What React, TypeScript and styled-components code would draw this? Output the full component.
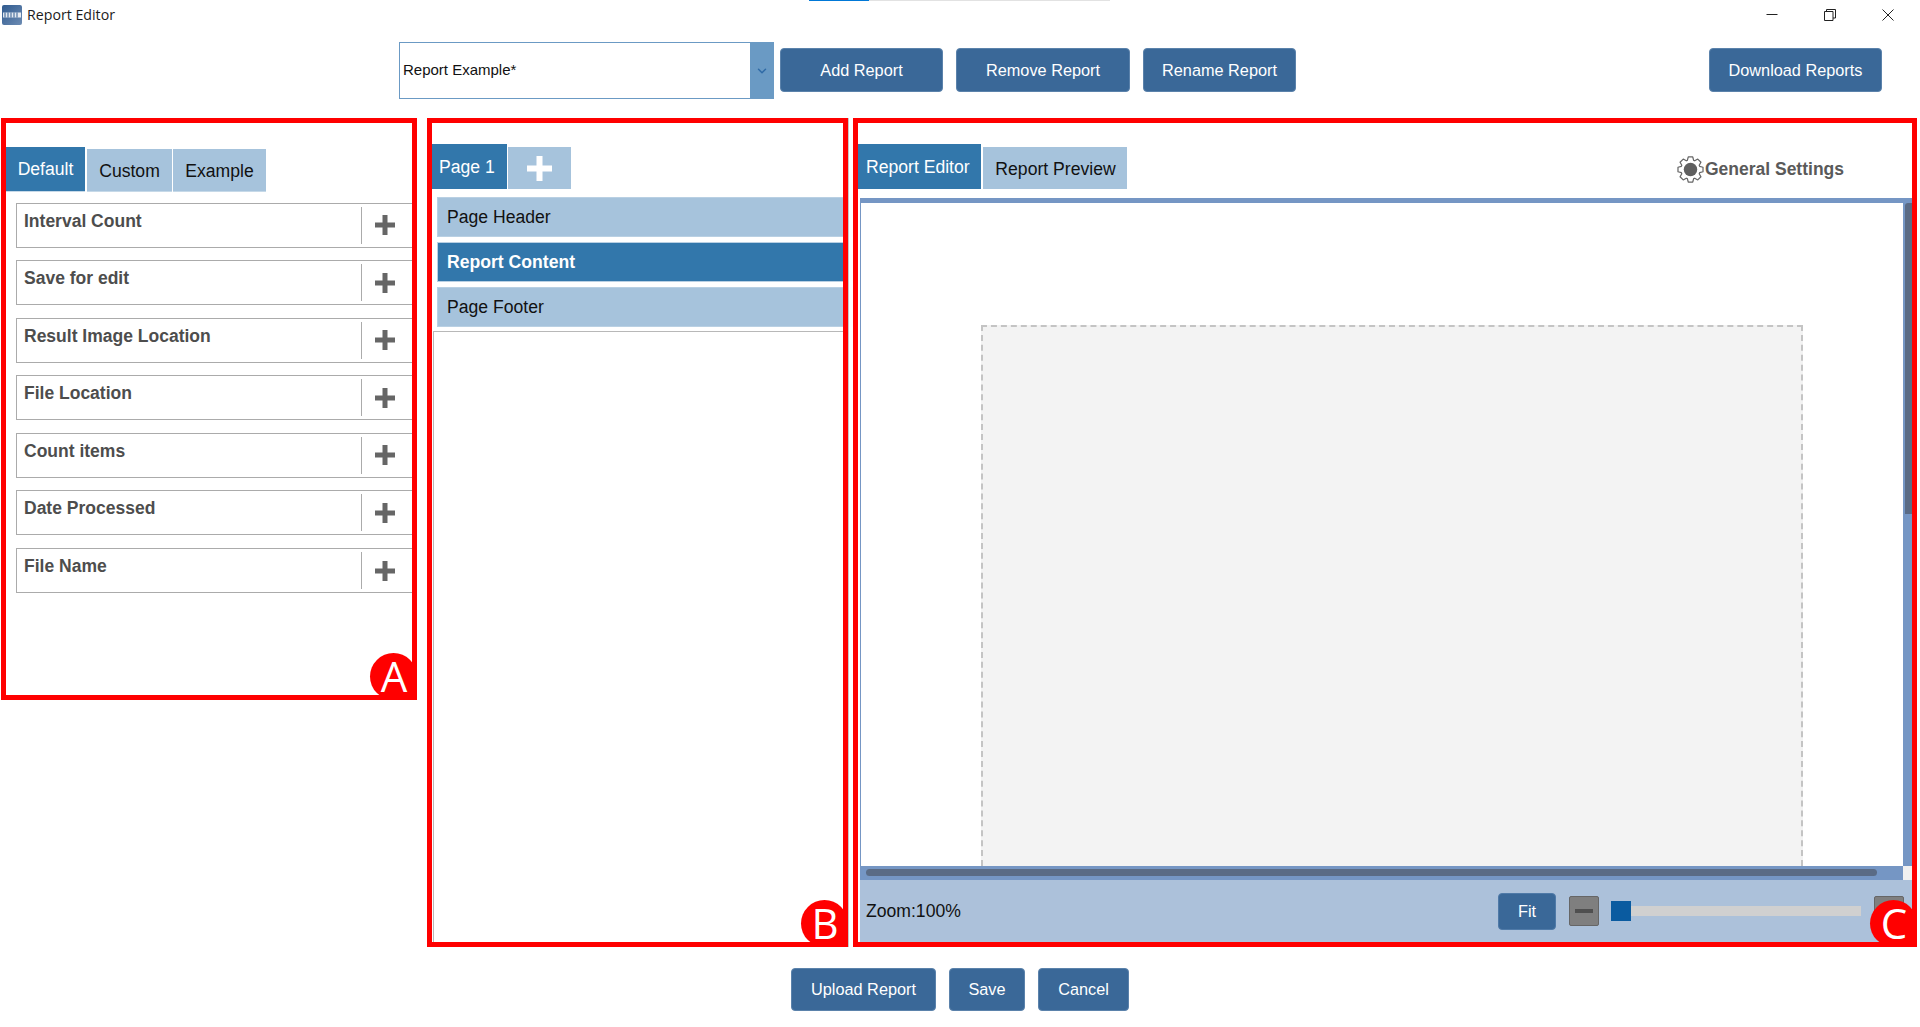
import { ChevronDown } from "lucide-react";
import styled, { createGlobalStyle } from "styled-components";

const GlobalStyle = createGlobalStyle`
  html, body {
    margin: 0;
    padding: 0;
    background: #fff;
    font-family: "Liberation Sans", Arial, sans-serif;
  }
`;

const fields = [
  "Interval Count",
  "Save for edit",
  "Result Image Location",
  "File Location",
  "Count items",
  "Date Processed",
  "File Name",
];

const gearPath = () => {
  const pts: string[] = [];
  const cx = 12;
  const cy = 12;
  const teeth = 8;
  for (let i = 0; i < teeth; i++) {
    const a = (i / teeth) * Math.PI * 2;
    const w = Math.PI / teeth;
    const at = (r: number, t: number) =>
      `${(cx + r * Math.cos(t)).toFixed(2)} ${(cy + r * Math.sin(t)).toFixed(2)}`;
    pts.push(at(8.6, a - w * 0.85), at(11.3, a - w * 0.45), at(11.3, a + w * 0.45), at(8.6, a + w * 0.85));
  }
  return `M${pts.join("L")}Z`;
};

const PlusGlyph = ({ size, bar, color }: { size: number; bar: number; color: string }) => (
  <svg width={size} height={size} viewBox={`0 0 ${size} ${size}`}>
    <rect x={(size - bar) / 2} y={0} width={bar} height={size} fill={color} />
    <rect x={0} y={(size - bar) / 2} width={size} height={bar} fill={color} />
  </svg>
);

const App = () => {
  return (
    <>
      <GlobalStyle />
      <Page>
        <LoadStrip>
          <LoadDone />
        </LoadStrip>
        <TitleBar>
          <AppIcon viewBox="0 0 20 20">
            <defs>
              <linearGradient id="appIcon" x1="0" y1="0" x2="1" y2="1">
                <stop offset="0" stopColor="#2f5a8f" />
                <stop offset="1" stopColor="#6d8cb3" />
              </linearGradient>
            </defs>
            <rect width="20" height="20" rx="2" fill="url(#appIcon)" />
            <rect x="1" y="7.5" width="18" height="5" fill="#fff" opacity="0.85" />
            <path d="M3 7.5v5M6 7.5v5M9 7.5v5M12 7.5v5M15 7.5v5" stroke="#2f5a8f" strokeWidth="1" />
          </AppIcon>
          <TitleText>Report Editor</TitleText>
          <WindowControls>
            <WindowIcon viewBox="0 0 12 12">
              <path d="M.5 5.5h11" stroke="#222" strokeWidth="1" fill="none" />
            </WindowIcon>
            <WindowIcon viewBox="0 0 12 12">
              <path d="M.5 2.5h8.5v9h-8.5zM2.5 2.5v-2h9v8.500h-2.500" stroke="#222" strokeWidth="1" fill="none" />
            </WindowIcon>
            <WindowIcon viewBox="0 0 12 12">
              <path d="M.5.5l11 11M11.500.5l-11 11" stroke="#222" strokeWidth="1" fill="none" />
            </WindowIcon>
          </WindowControls>
        </TitleBar>

        <Toolbar>
          <ReportSelect>
            <SelectValue>Report Example*</SelectValue>
            <SelectArrow>
              <ChevronDown size={14} color="#2f6aa6" strokeWidth={2.5} />
            </SelectArrow>
          </ReportSelect>
          <ActionButton $width={163}>Add Report</ActionButton>
          <ActionButton $width={174}>Remove Report</ActionButton>
          <ActionButton $width={153}>Rename Report</ActionButton>
          <ToolbarSpacer />
          <ActionButton $width={173}>Download Reports</ActionButton>
        </Toolbar>

        <Panels>
          <FieldsPanel>
            <FieldTabs>
              <FieldTab $active $width={79}>
                Default
              </FieldTab>
              <FieldTab $width={85}>Custom</FieldTab>
              <FieldTab $width={93}>Example</FieldTab>
            </FieldTabs>
            <FieldList>
              {fields.map((name) => (
                <FieldRow key={name}>
                  <FieldName>{name}</FieldName>
                  <FieldAdd>
                    <PlusGlyph size={20} bar={5} color="#666" />
                  </FieldAdd>
                </FieldRow>
              ))}
            </FieldList>
            <Badge>A</Badge>
          </FieldsPanel>

          <PagesPanel>
            <PageTabs>
              <PageTab $width={75} $pad={7}>
                Page 1
              </PageTab>
              <AddPageTab>
                <PlusGlyph size={25} bar={6} color="#fff" />
              </AddPageTab>
            </PageTabs>
            <SectionList>
              <SectionItem>Page Header</SectionItem>
              <SectionItem $active>Report Content</SectionItem>
              <SectionItem>Page Footer</SectionItem>
            </SectionList>
            <SectionBody />
            <Badge>B</Badge>
          </PagesPanel>

          <EditorPanel>
            <EditorHeader>
              <PageTab $width={123} $pad={8}>
                Report Editor
              </PageTab>
              <PreviewTab>Report Preview</PreviewTab>
              <GeneralSettings>
                <svg width="27" height="27" viewBox="0 0 24 24">
                  <path d={gearPath()} fill="#fff" stroke="#666" strokeWidth="1.1" strokeLinejoin="round" />
                  <circle cx="12" cy="12" r="6" fill="#5f5f5f" />
                </svg>
                General Settings
              </GeneralSettings>
            </EditorHeader>
            <EditorFrame>
              <CanvasRow>
                <Canvas>
                  <ReportSheet />
                </Canvas>
                <VScroll>
                  <VThumb />
                </VScroll>
              </CanvasRow>
              <HScroll>
                <HThumb />
                <ScrollCorner />
              </HScroll>
              <StatusBar>
                <ZoomLabel>Zoom:100%</ZoomLabel>
                <FitButton>Fit</FitButton>
                <ZoomStep>
                  <ZoomDash />
                </ZoomStep>
                <ZoomTrack>
                  <ZoomHandle />
                </ZoomTrack>
                <ZoomStep>
                  <ZoomDash />
                </ZoomStep>
              </StatusBar>
            </EditorFrame>
            <Badge>C</Badge>
          </EditorPanel>
        </Panels>

        <Footer>
          <ActionButton $width={145}>Upload Report</ActionButton>
          <ActionButton $width={76}>Save</ActionButton>
          <ActionButton $width={91}>Cancel</ActionButton>
        </Footer>
      </Page>
    </>
  );
};

export default App;

const Page = styled.div`
  width: 1920px;
  height: 1027px;
  display: flex;
  flex-direction: column;
  overflow: hidden;
  background: #fff;
`;

const LoadStrip = styled.div`
  width: 301px;
  height: 1px;
  margin-left: 809px;
  background: #e2e2e2;
`;

const LoadDone = styled.div`
  width: 60px;
  height: 1px;
  background: #0078d7;
`;

const TitleBar = styled.div`
  height: 27px;
  margin-bottom: 2px;
  display: flex;
  align-items: center;
  padding: 0 26px 0 2px;
  box-sizing: border-box;
`;

const AppIcon = styled.svg`
  width: 20px;
  height: 20px;
  margin-right: 5px;
`;

const TitleText = styled.span`
  font-family: "Open Sans", sans-serif;
  font-size: 14.2px;
  color: #1c1c1c;
`;

const WindowControls = styled.div`
  margin-left: auto;
  display: flex;
  gap: 46px;
`;

const WindowIcon = styled.svg`
  width: 12px;
  height: 12px;
`;

const Toolbar = styled.div`
  height: 57px;
  margin: 12px 0 19px;
  padding: 0 38px 0 399px;
  display: flex;
  align-items: flex-start;
  gap: 13px;
`;

const ToolbarSpacer = styled.div`
  flex: 1;
`;

const ReportSelect = styled.div`
  width: 375px;
  height: 57px;
  margin-right: -7px;
  box-sizing: border-box;
  display: flex;
  border: 1px solid #6b9ac4;
`;

const SelectValue = styled.div`
  flex: 1;
  display: flex;
  align-items: center;
  padding: 0 0 2px 3px;
  font-size: 15px;
  color: #111;
`;

const SelectArrow = styled.div`
  width: 23px;
  display: flex;
  align-items: center;
  justify-content: center;
  background: #6a9ac4;
`;

const ActionButton = styled.button<{ $width: number }>`
  width: ${(p) => p.$width}px;
  height: 43px;
  padding: 0;
  box-sizing: border-box;
  background: #3a6898;
  border: 1px solid #5b82ab;
  border-radius: 4px;
  color: #fff;
  font-family: "Liberation Sans", Arial, sans-serif;
  font-size: 16.3px;

  ${Toolbar} & {
    height: 44px;
    margin-top: 6px;
  }
`;

const Panels = styled.div`
  display: flex;
  align-items: flex-start;
  padding-left: 1px;
`;

const RedPanel = styled.section`
  position: relative;
  box-sizing: border-box;
  border: 5px solid #ff0000;
  background: #fff;
`;

const FieldsPanel = styled(RedPanel)`
  width: 416px;
  height: 582px;
  margin-right: 10px;
  padding-top: 24px;
`;

const PagesPanel = styled(RedPanel)`
  width: 421px;
  height: 829px;
  margin-right: 5px;
  padding-top: 21px;
  display: flex;
  flex-direction: column;
  box-shadow: 1px 0 0 #c8c8c8;
`;

const EditorPanel = styled(RedPanel)`
  width: 1064px;
  height: 829px;
  padding-top: 21px;
  display: flex;
  flex-direction: column;
`;

const Badge = styled.div`
  position: absolute;
  right: 0;
  bottom: 0;
  z-index: 0;
  width: 36px;
  height: 36px;
  color: #fff;
  font-family: "Open Sans", sans-serif;
  font-size: 42px;
  line-height: 34px;
  text-align: center;

  &::before {
    content: "";
    position: absolute;
    z-index: -1;
    left: -6px;
    top: -6px;
    width: 47px;
    height: 47px;
    border-radius: 50%;
    background: #ff0000;
  }

  &::after {
    content: "";
    position: absolute;
    z-index: -1;
    right: 0;
    bottom: 0;
    width: 10px;
    height: 10px;
    background: #ff0000;
  }
`;

const FieldTabs = styled.div`
  height: 45px;
  display: flex;
  align-items: flex-end;
  gap: 1px;
`;

const FieldTab = styled.div<{ $active?: boolean; $width: number }>`
  width: ${(p) => p.$width}px;
  height: ${(p) => (p.$active ? 45 : 43)}px;
  margin-right: ${(p) => (p.$active ? 1 : 0)}px;
  display: flex;
  align-items: center;
  justify-content: center;
  padding-top: ${(p) => (p.$active ? 0 : 3)}px;
  background: ${(p) => (p.$active ? "#3277ab" : "#a6c3dc")};
  border-bottom: 1px solid #c6d9e8;
  box-sizing: border-box;
  color: ${(p) => (p.$active ? "#fff" : "#111")};
  font-size: 17.6px;
`;

const FieldList = styled.div`
  margin: 10.500px 0 0 10px;
  display: flex;
  flex-direction: column;
  gap: 12.6px;
`;

const FieldRow = styled.div`
  height: 45px;
  box-sizing: border-box;
  display: flex;
  align-items: center;
  border: 1px solid #ababab;
  border-right: none;
`;

const FieldName = styled.div`
  flex: 1;
  align-self: flex-start;
  padding: 7px 0 0 7px;
  color: #4d4d4d;
  font-size: 17.5px;
  font-weight: bold;
`;

const FieldAdd = styled.div`
  width: 51px;
  height: 37px;
  display: flex;
  align-items: center;
  justify-content: center;
  border-left: 1px solid #ababab;
  box-sizing: border-box;
  padding-right: 4px;
`;

const PageTabs = styled.div`
  height: 45px;
  display: flex;
  align-items: flex-end;
  gap: 1px;
`;

const PageTab = styled.div<{ $width: number; $pad: number }>`
  width: ${(p) => p.$width}px;
  height: 45px;
  box-sizing: border-box;
  padding: 1px 0 0 ${(p) => p.$pad}px;
  display: flex;
  align-items: center;
  background: #3277ab;
  color: #fff;
  font-size: 17.6px;
`;

const AddPageTab = styled.div`
  width: 63px;
  height: 42px;
  display: flex;
  align-items: center;
  justify-content: center;
  background: #a6c3dc;
`;

const SectionList = styled.div`
  margin: 8px 0 0 5px;
  display: flex;
  flex-direction: column;
  gap: 5px;
`;

const SectionItem = styled.div<{ $active?: boolean }>`
  height: 40px;
  box-sizing: border-box;
  padding-left: 9px;
  display: flex;
  align-items: center;
  background: ${(p) => (p.$active ? "#3277ab" : "#a6c3dc")};
  border: 1px solid #b9d0e3;
  border-right: none;
  color: ${(p) => (p.$active ? "#fff" : "#111")};
  font-size: 17.6px;
  font-weight: ${(p) => (p.$active ? "bold" : "normal")};
`;

const SectionBody = styled.div`
  flex: 1;
  margin: 4px 0 0 1px;
  border-top: 1px solid #b8b8b8;
  border-left: 1px solid #b8b8b8;
`;

const EditorHeader = styled.div`
  height: 45px;
  display: flex;
  align-items: flex-end;
  gap: 2px;
`;

const PreviewTab = styled.div`
  width: 144px;
  height: 42px;
  display: flex;
  align-items: center;
  justify-content: center;
  padding: 3px 0 0 1px;
  box-sizing: border-box;
  background: #a6c3dc;
  color: #111;
  font-size: 17.6px;
`;

const GeneralSettings = styled.div`
  margin: 0 68px 6px auto;
  display: flex;
  align-items: center;
  gap: 1px;
  color: #5a5a5a;
  font-size: 17.500px;
  font-weight: bold;
`;

const EditorFrame = styled.div`
  flex: 1;
  margin: 9px 0 0 2px;
  display: flex;
  flex-direction: column;
  border-top: 5px solid #7596c4;
  min-height: 0;
`;

const CanvasRow = styled.div`
  flex: 1;
  display: flex;
  min-height: 0;
`;

const Canvas = styled.div`
  flex: 1;
  padding: 122px 0 0 120px;
  background: #fff;
  border-left: 1px solid #7596c4;
  box-sizing: border-box;
  display: flex;
  min-height: 0;
`;

const ReportSheet = styled.div`
  width: 822px;
  box-sizing: border-box;
  background: #f3f3f3;
  border: 2px dashed #c4c4c4;
  border-bottom: none;
`;

const VScroll = styled.div`
  width: 9px;
  background: #7596c4;
  display: flex;
  justify-content: flex-end;
`;

const VThumb = styled.div`
  width: 7px;
  height: 311px;
  background: #5a6b85;
  border-radius: 3px 0 0 0;
`;

const HScroll = styled.div`
  height: 14px;
  padding: 3px 0 4px 6px;
  box-sizing: border-box;
  background: #7596c4;
  display: flex;
  align-items: stretch;
`;

const HThumb = styled.div`
  width: 1011px;
  background: #5a6b85;
  border-radius: 4px;
`;

const ScrollCorner = styled.div`
  width: 9px;
  margin: -3px 0 -4px auto;
  background: #f0f0f0;
`;

const StatusBar = styled.div`
  height: 62px;
  flex-shrink: 0;
  box-sizing: border-box;
  padding: 0 8px 0 6px;
  display: flex;
  align-items: center;
  background: #acc1da;
`;

const ZoomLabel = styled.span`
  margin-right: auto;
  color: #111;
  font-size: 17.6px;
`;

const FitButton = styled.button`
  width: 58px;
  height: 37px;
  padding: 0;
  margin-right: 13px;
  background: #3a6898;
  border: 1px solid #4f7aa8;
  border-radius: 4px;
  color: #fff;
  font-family: "Liberation Sans", Arial, sans-serif;
  font-size: 16.3px;
`;

const ZoomStep = styled.div`
  width: 30px;
  height: 30px;
  box-sizing: border-box;
  display: flex;
  align-items: center;
  justify-content: center;
  background: #7f7f7f;
  border: 1px solid #666;
  border-radius: 2px;
`;

const ZoomDash = styled.div`
  width: 18px;
  height: 4px;
  background: #4f4f4f;
`;

const ZoomTrack = styled.div`
  position: relative;
  width: 250px;
  height: 10px;
  margin: 0 13px 0 12px;
  background: #d0d0d0;
`;

const ZoomHandle = styled.div`
  position: absolute;
  left: 0;
  top: -5px;
  width: 20px;
  height: 20px;
  background: #0a5ba0;
`;

const Footer = styled.div`
  margin-top: 21px;
  display: flex;
  justify-content: center;
  gap: 13px;
`;
